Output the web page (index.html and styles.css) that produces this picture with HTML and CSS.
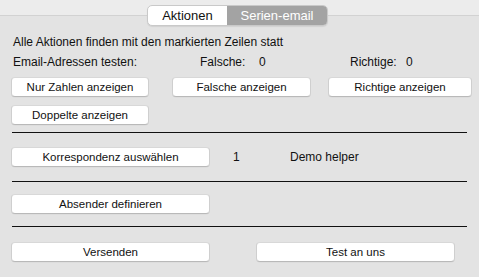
FILE: index.html
```html
<!DOCTYPE html>
<html lang="de">
<head>
  <meta charset="UTF-8">
  <title>Serien-email</title>
  <link rel="stylesheet" href="styles.css">
</head>
<body>
  <div class="tabs">
    <div class="tab">Aktionen</div>
    <div class="tab active">Serien-email</div>
  </div>

  <div class="panel">
    <p class="intro">Alle Aktionen finden mit den markierten Zeilen statt</p>

    <div class="stats">
      <span class="stat-label">Email-Adressen testen:</span>
      <span class="falsche">Falsche:</span>
      <span class="falsche-num">0</span>
      <span class="richtige">Richtige:</span>
      <span class="richtige-num">0</span>
    </div>

    <div class="row row-first">
      <button class="btn btn-nur">Nur Zahlen anzeigen</button>
      <button class="btn btn-falsche">Falsche anzeigen</button>
      <button class="btn btn-richtige">Richtige anzeigen</button>
    </div>
    <div class="row row-doppelte">
      <button class="btn btn-nur">Doppelte anzeigen</button>
    </div>

    <hr class="sep sep-1">

    <div class="row row-korr">
      <button class="btn btn-wide">Korrespondenz auswählen</button>
      <span class="korr-num">1</span>
      <span class="korr-name">Demo helper</span>
    </div>

    <hr class="sep sep-2">

    <div class="row row-absender">
      <button class="btn btn-wide">Absender definieren</button>
    </div>

    <hr class="sep sep-3">

    <div class="row row-send">
      <button class="btn btn-wide">Versenden</button>
      <button class="btn btn-wide btn-test">Test an uns</button>
    </div>
  </div>
</body>
</html>
```

FILE: styles.css
```css
html {
  box-sizing: border-box;
}
*, *::before, *::after {
  box-sizing: inherit;
}
body {
  margin: 0;
  height: 277px;
  overflow: hidden;
  background: #ececec;
  font-family: 'Liberation Sans', Arial, sans-serif;
  font-size: 12px;
  color: #111;
}
.tabs {
  position: relative;
  z-index: 1;
  display: flex;
  width: 181px;
  height: 21px;
  margin: 5px 0 -11px 147px;
  border: 1px solid #c9c9c9;
  border-radius: 5px;
  background: #fff;
  overflow: hidden;
  box-shadow: 0 1px 1px rgba(0, 0, 0, 0.08);
}
.tab {
  width: 79px;
  display: flex;
  align-items: center;
  justify-content: center;
  font-size: 13px;
  color: #111;
}
.tab.active {
  flex: 1;
  background: #a3a3a3;
  color: #fff;
}
.panel {
  height: 262px;
  background: #e3e3e3;
  border-top: 1px solid #d2d2d2;
  padding-top: 19px;
}
.intro {
  margin: 0 0 0 13px;
  height: 14px;
  line-height: 14px;
}
.stats {
  height: 14px;
  line-height: 14px;
  margin-top: 6px;
  display: flex;
}
.stat-label {
  margin-left: 13px;
  width: 187px;
}
.falsche {
  width: 59px;
}
.falsche-num {
  width: 91px;
}
.richtige {
  width: 56px;
}
.row {
  display: flex;
  align-items: center;
  margin-left: 11px;
}
.row-first {
  margin-top: 8px;
}
.row-doppelte {
  margin-top: 8px;
}
.btn {
  height: 20px;
  padding: 0;
  background: #fff;
  border: 1px solid #cfcfcf;
  border-top-color: #d8d8d8;
  border-bottom-color: #b9b9b9;
  border-radius: 4px;
  font-family: inherit;
  font-size: 11.5px;
  color: #111;
  box-shadow: 0 0.5px 0 rgba(0, 0, 0, 0.05);
}
.btn-nur {
  width: 138px;
}
.btn-falsche {
  width: 139px;
  margin-left: 23px;
}
.btn-richtige {
  width: 144px;
  margin-left: 17px;
}
.btn-wide {
  width: 199px;
}
.btn-test {
  margin-left: 46px;
}
.sep {
  margin: 0 0 0 12px;
  width: 455px;
  height: 1px;
  border: none;
  background: #111;
}
.sep-1 {
  margin-top: 7px;
}
.row-korr {
  margin-top: 14px;
  height: 20px;
}
.korr-num {
  margin-left: 23px;
  width: 57px;
}
.sep-2 {
  margin-top: 14px;
}
.row-absender {
  margin-top: 12px;
}
.sep-3 {
  margin-top: 12px;
}
.row-send {
  margin-top: 15px;
}
```
